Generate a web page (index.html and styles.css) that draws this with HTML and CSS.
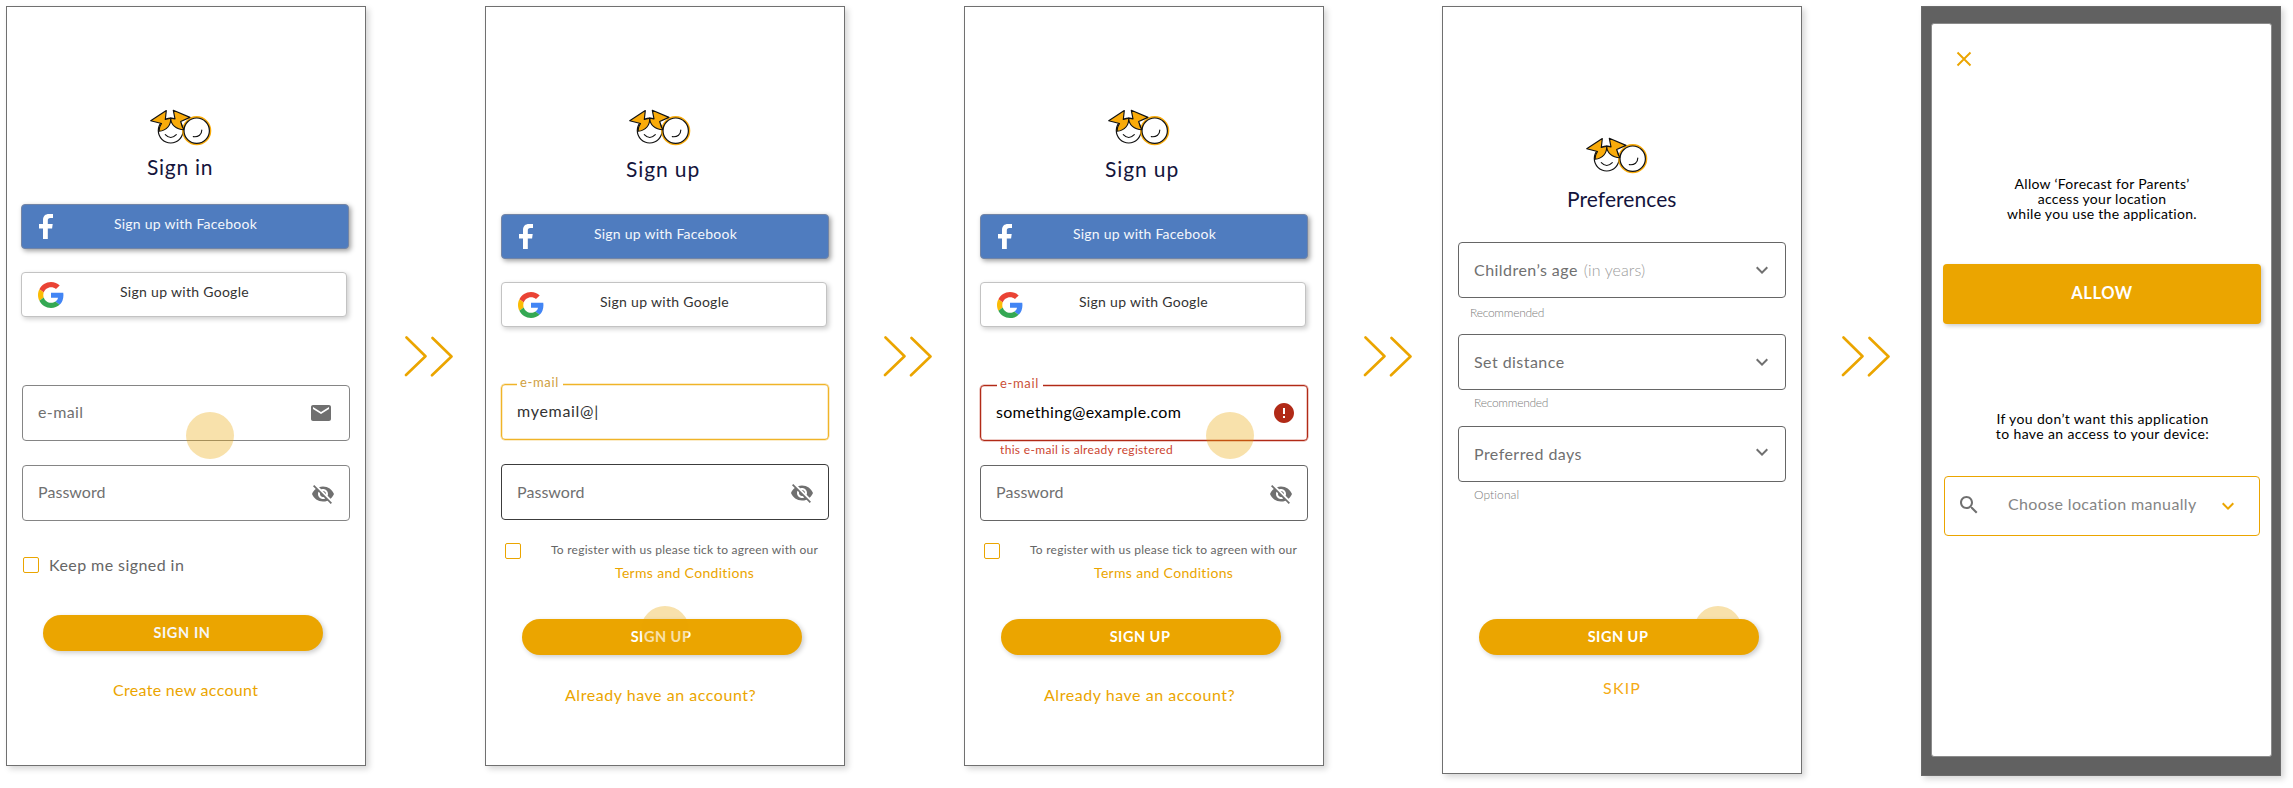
FILE: index.html
```html
<!DOCTYPE html>
<html lang="en">
<head>
<meta charset="utf-8">
<title>Forecast for Parents – onboarding flow</title>
<link rel="stylesheet" href="styles.css">
</head>
<body>
<svg class="defs" aria-hidden="true">
  <symbol id="logo" viewBox="0 0 66 38">
    <circle cx="22.7" cy="22.6" r="12.4" fill="#fff" stroke="#111" stroke-width="1.2"/>
    <circle cx="48.7" cy="22.7" r="13.6" fill="#fff" stroke="#f9ab0a" stroke-width="2"/>
    <path d="M2.700 12.700 18.300 2.600 17.300 11.500 22.700 10.200C23 17 19 22.500 11 23.300 10.800 19 12 17.500 13.500 15.500Z" fill="#f9ab0a" stroke="#111" stroke-width="1.150" stroke-linejoin="round"/>
    <path d="M25.300 2.300 42 9.400 32.700 13.500C33.500 17 34 19 36 21.700 28 21.500 23 17 22.700 10.200L27 10.900Z" fill="#f9ab0a" stroke="#111" stroke-width="1.150" stroke-linejoin="round"/>
    <circle cx="48.7" cy="22.7" r="12.7" fill="#fff" stroke="#111" stroke-width="1.2"/>
    <path d="M17.300 26.700Q22.700 32.300 28.300 26.700M45.300 28.600C50.500 29.300 53.800 26.500 53.800 22" fill="none" stroke="#111" stroke-width="1.150" stroke-linecap="round"/>
  </symbol>
  <symbol id="facebook" viewBox="0 0 14 25">
    <path d="M4 25V14.4H0V10h4V6.200C4 2 6.300 0 10 0h4v4.100h-2.600C9.400 4.100 8.800 5 8.800 6.800V10h4.900l-.6 4.400H8.800V25Z" fill="#fff"/>
  </symbol>
  <symbol id="google" viewBox="0 0 48 48">
    <path fill="#EA4335" d="M24 9.5c3.54 0 6.71 1.22 9.21 3.6l6.85-6.85C35.9 2.38 30.47 0 24 0 14.62 0 6.51 5.38 2.56 13.22l7.98 6.19C12.43 13.72 17.74 9.5 24 9.5z"/>
    <path fill="#4285F4" d="M46.98 24.55c0-1.57-.15-3.09-.38-4.55H24v9.02h12.94c-.58 2.96-2.26 5.48-4.78 7.18l7.73 6c4.51-4.18 7.09-10.36 7.09-17.65z"/>
    <path fill="#FBBC05" d="M10.53 28.59c-.48-1.45-.76-2.99-.76-4.59s.27-3.14.76-4.59l-7.98-6.19C.92 16.46 0 20.12 0 24c0 3.88.92 7.54 2.56 10.78l7.97-6.19z"/>
    <path fill="#34A853" d="M24 48c6.48 0 11.93-2.13 15.89-5.81l-7.73-6c-2.15 1.45-4.92 2.3-8.16 2.3-6.26 0-11.57-4.22-13.47-9.91l-7.98 6.19C6.51 42.62 14.62 48 24 48z"/>
  </symbol>
  <symbol id="mail" viewBox="0 0 24 24"><path d="M20 4H4c-1.1 0-1.99.9-1.99 2L2 18c0 1.1.9 2 2 2h16c1.100 0 2-.9 2-2V6c0-1.100-.9-2-2-2zm0 4-8 5-8-5V6l8 5 8-5v2z"/></symbol>
  <symbol id="eye-off" viewBox="0 0 24 24"><path d="M12 7c2.760 0 5 2.240 5 5 0 .65-.13 1.260-.36 1.830l2.920 2.920c1.510-1.260 2.700-2.890 3.430-4.750-1.730-4.390-6-7.500-11-7.500-1.400 0-2.740.25-3.980.7l2.160 2.160C10.740 7.130 11.350 7 12 7zM2 4.270l2.280 2.280.46.46C3.080 8.300 1.780 10.020 1 12c1.730 4.390 6 7.500 11 7.500 1.550 0 3.030-.3 4.380-.84l.42.42L19.730 22 21 20.730 3.270 3 2 4.270zM7.530 9.800l1.550 1.550c-.05.21-.08.43-.08.65 0 1.660 1.340 3 3 3 .22 0 .44-.03.65-.08l1.550 1.550c-.67.33-1.410.53-2.200.53-2.760 0-5-2.240-5-5 0-.79.2-1.530.53-2.200zm4.310-.78 3.150 3.150.02-.16c0-1.660-1.340-3-3-3l-.17.01z"/></symbol>
  <symbol id="error" viewBox="0 0 24 24"><path d="M12 2C6.480 2 2 6.480 2 12s4.480 10 10 10 10-4.480 10-10S17.520 2 12 2zm1 15h-2v-2h2v2zm0-4h-2V7h2v6z"/></symbol>
  <symbol id="expand" viewBox="0 0 24 24"><path d="M16.590 8.590 12 13.170 7.410 8.590 6 10l6 6 6-6z"/></symbol>
  <symbol id="search" viewBox="0 0 24 24"><path d="M15.500 14h-.79l-.28-.27C15.410 12.590 16 11.110 16 9.500 16 5.910 13.090 3 9.500 3S3 5.910 3 9.500 5.910 16 9.500 16c1.610 0 3.090-.59 4.230-1.570l.27.28v.79l5 4.990L20.490 19l-4.990-5zm-6 0C7.010 14 5 11.990 5 9.500S7.010 5 9.500 5 14 7.010 14 9.500 11.990 14 9.500 14z"/></symbol>
  <symbol id="next" viewBox="0 0 50 42"><path d="M2.500 2.500 21.500 21.200 2 40M28.500 3 47.500 21.500 28 40.300" fill="none" stroke="#eba500" stroke-width="2.600" stroke-linecap="round" stroke-linejoin="round"/></symbol>
</svg>

<main class="flow">
  <section class="phone signin">
    <svg class="logo"><use href="#logo"/></svg>
    <h1 class="title t-signin">Sign in</h1>
    <button class="social fb"><svg class="fb-icon"><use href="#facebook"/></svg><span>Sign up with Facebook</span></button>
    <button class="social gg"><svg class="gg-icon"><use href="#google"/></svg><span>Sign up with Google</span></button>
    <div class="field email"><span class="txt">e-mail</span><svg class="icon mail"><use href="#mail"/></svg><i class="tap"></i></div>
    <div class="field password"><span class="txt pw">Password</span><svg class="icon eye"><use href="#eye-off"/></svg></div>
    <label class="keep"><i class="box"></i><span>Keep me signed in</span></label>
    <button class="pill">SIGN IN</button>
    <a class="link create">Create new account</a>
  </section>

  <svg class="next n1"><use href="#next"/></svg>

  <section class="phone signup typing">
    <svg class="logo"><use href="#logo"/></svg>
    <h1 class="title t-signup">Sign up</h1>
    <button class="social fb"><svg class="fb-icon"><use href="#facebook"/></svg><span>Sign up with Facebook</span></button>
    <button class="social gg"><svg class="gg-icon"><use href="#google"/></svg><span>Sign up with Google</span></button>
    <div class="field email active"><span class="label">e-mail</span><span class="txt typed">myemail@|</span></div>
    <div class="field password dark"><span class="txt pw">Password</span><svg class="icon eye"><use href="#eye-off"/></svg></div>
    <div class="consent"><i class="box"></i><p>To register with us please tick to agreen with our<a>Terms and Conditions</a></p></div>
    <button class="pill up">SIGN UP<i class="tap"></i></button>
    <a class="link already">Already have an account?</a>
  </section>

  <svg class="next n2"><use href="#next"/></svg>

  <section class="phone signup failed">
    <svg class="logo"><use href="#logo"/></svg>
    <h1 class="title t-signup">Sign up</h1>
    <button class="social fb"><svg class="fb-icon"><use href="#facebook"/></svg><span>Sign up with Facebook</span></button>
    <button class="social gg"><svg class="gg-icon"><use href="#google"/></svg><span>Sign up with Google</span></button>
    <div class="field email invalid"><span class="label">e-mail</span><span class="txt filled">something@example.com</span><svg class="icon err"><use href="#error"/></svg><i class="tap"></i></div>
    <p class="message">this e-mail is already registered</p>
    <div class="field password mid"><span class="txt pw">Password</span><svg class="icon eye"><use href="#eye-off"/></svg></div>
    <div class="consent"><i class="box"></i><p>To register with us please tick to agreen with our<a>Terms and Conditions</a></p></div>
    <button class="pill up">SIGN UP</button>
    <a class="link already">Already have an account?</a>
  </section>

  <svg class="next n3"><use href="#next"/></svg>

  <section class="phone prefs">
    <svg class="logo"><use href="#logo"/></svg>
    <h1 class="title t-prefs">Preferences</h1>
    <div class="field select s1"><span class="txt age">Children’s age</span><span class="txt years">(in years)</span><svg class="icon"><use href="#expand"/></svg></div>
    <p class="hint h1">Recommended</p>
    <div class="field select s2"><span class="txt">Set distance</span><svg class="icon"><use href="#expand"/></svg></div>
    <p class="hint h2">Recommended</p>
    <div class="field select s3"><span class="txt">Preferred days</span><svg class="icon"><use href="#expand"/></svg></div>
    <p class="hint h3">Optional</p>
    <button class="pill up">SIGN UP<i class="tap"></i></button>
    <a class="link skip">SKIP</a>
  </section>

  <svg class="next n4"><use href="#next"/></svg>

  <section class="phone location">
    <div class="dialog">
      <svg class="close" viewBox="0 0 16 16"><path d="M1.500 1.500 14.500 14.500M14.500 1.500 1.500 14.500" stroke="#eba500" stroke-width="1.900"/></svg>
      <p class="ask">Allow ‘Forecast for Parents’<br>access your location<br>while you use the application.</p>
      <button class="allow">ALLOW</button>
      <p class="ask other">If you don’t want this application<br>to have an access to your device:</p>
      <div class="manual">
        <svg class="icon lens"><use href="#search"/></svg>
        <span>Choose location manually</span>
        <svg class="icon arrow"><use href="#expand"/></svg>
      </div>
    </div>
  </section>
</main>
</body>
</html>
```
FILE: styles.css
```css
* { box-sizing: border-box; }
body {
  margin: 0;
  background: #fff;
  font-family: Lato, "Liberation Sans", sans-serif;
  overflow: hidden;
}
h1, p { margin: 0; font-weight: 400; }
button { font: inherit; border: 0; padding: 0; }
i { display: block; }
.defs { position: absolute; width: 0; height: 0; }

.flow { display: flex; align-items: flex-start; padding: 6px 0 0 6px; height: 788px; }

.phone {
  flex: none;
  display: flex;
  flex-direction: column;
  align-items: flex-start;
  width: 360px;
  height: 760px;
  background: #fff;
  border: 1px solid #707070;
  box-shadow: 3px 3px 6px rgba(0, 0, 0, .16);
}
.prefs { height: 768px; }

/* arrows between the screens */
.next { flex: none; width: 50px; height: 42px; margin-top: 329px; }
.n1, .n2 { margin-left: 38px; margin-right: 31px; }
.n3 { margin-left: 39px; margin-right: 29px; }
.n4 { margin-left: 39px; margin-right: 30px; }

.logo { flex: none; width: 66px; height: 38px; margin: 101px 0 0 141px; }
.prefs .logo { margin-top: 129px; }

.title { font-size: 21px; line-height: 24px; padding-top: 1px; height: 24px; color: #14143c; white-space: nowrap; }
.t-signin { margin: 8px 0 0 140px; letter-spacing: .73px; }
.t-signup { margin: 10px 0 0 140px; letter-spacing: .9px; }
.t-prefs { margin: 12px 0 0 124px; letter-spacing: .07px; }

.social {
  flex: none;
  display: grid;
  grid-template-columns: 100%;
  width: 328px;
  height: 45px;
  margin-left: 15px;
  border-radius: 4px;
  font-size: 14px;
  line-height: 20px;
}
.social > * { grid-area: 1 / 1; }
.social span { margin-top: 9px; padding-left: 1px; text-align: center; }
.signin .social { margin-left: 14px; }
.fb {
  margin-top: 34px;
  background: #4f7cbf;
  border: 1px solid #7385a6;
  box-shadow: 2px 2px 5px rgba(0, 0, 0, .38);
  color: #f4f7fc;
  letter-spacing: .25px;
}
.signin .fb { margin-top: 26px; }
.gg {
  width: 326px;
  margin-top: 23px;
  background: #fff;
  border: 1px solid #c3c3c3;
  box-shadow: 2px 2px 5px rgba(0, 0, 0, .2);
  color: #333;
  letter-spacing: .3px;
}
.fb-icon { width: 14px; height: 25px; margin: 9px 0 0 17px; }
.gg-icon { width: 26px; height: 26px; margin: 9px 0 0 16px; }

.field {
  flex: none;
  position: relative;
  display: flex;
  align-items: flex-start;
  width: 328px;
  height: 56px;
  margin-left: 15px;
  padding: 0 0 0 15px;
  border: 1px solid #858585;
  border-radius: 4px;
}
.txt {
  margin-top: 16px;
  font-size: 16px;
  line-height: 20px;
  letter-spacing: .4px;
  color: #707070;
  white-space: nowrap;
}
.pw { letter-spacing: .05px; }
.icon { flex: none; width: 24px; height: 24px; fill: #707070; margin: 15px 11px 0 auto; }
.mail { margin-right: 16px; }
.eye { margin: 16px 14px 0 auto; }

.signin .email { margin-top: 68px; }
.signin .password { margin-top: 24px; }
.typing .email { margin-top: 57px; }
.typing .password { margin-top: 24px; }
.typing .pw { margin-top: 17px; }
.failed .email { margin-top: 58px; }
.failed .password { margin-top: 7px; }
.dark { border-color: #3c3c3c; }
.mid { border-color: #666; }

.active { border: 1px solid #f0b428; box-shadow: 0 0 0 .5px rgba(240, 180, 40, .5), inset 0 0 0 .5px rgba(240, 180, 40, .5); }
.invalid { border: 1px solid #b12a17; box-shadow: 0 0 0 .5px rgba(190, 50, 30, .5), inset 0 0 0 .5px rgba(190, 50, 30, .5); }
.label {
  position: absolute;
  left: 15px;
  top: -11px;
  padding: 0 4px 0 3px;
  background: #fff;
  font-size: 13px;
  line-height: 16px;
  letter-spacing: .65px;
  color: #cfa040;
}
.invalid .label { left: 16px; color: #cb5138; }
.typed { letter-spacing: .7px; color: #333; }
.failed .filled { letter-spacing: .3px; color: #000; }
.err { fill: #b12a17; }
.message { margin-left: 35px; margin-top: 1px; font-size: 12px; line-height: 16px; letter-spacing: .33px; color: #cc452f; }

/* finger position marker */
.tap {
  position: absolute;
  width: 48px;
  height: 47px;
  border-radius: 50%;
  background: rgba(235, 165, 0, .33);
}
.signin .tap { left: 163px; top: 26px; }
.failed .tap { left: 225px; top: 26px; }
.typing .tap { left: 119px; top: -13px; }
.prefs .tap { left: 215px; top: -13px; clip-path: inset(0 0 33px 0); }

.box { flex: none; width: 16px; height: 16px; border: 1px solid #eba500; border-radius: 2px; }
.keep {
  flex: none;
  display: flex;
  align-items: center;
  gap: 10px;
  height: 16px;
  margin: 36px 0 0 16px;
  font-size: 16px;
  line-height: 20px;
  letter-spacing: .43px;
  color: #666;
}
.consent { flex: none; display: flex; gap: 30px; height: 41px; margin: 21px 0 0 19px; }
.failed .consent { margin-top: 20px; }
.consent .box { margin-top: 2px; }
.consent p {
  padding-top: 1px;
  font-size: 12px;
  line-height: 16px;
  letter-spacing: .25px;
  color: #666;
  white-space: nowrap;
}
.consent a {
  display: block;
  margin: 5px 0 0 64px;
  font-size: 14px;
  line-height: 20px;
  letter-spacing: .32px;
  color: #eba500;
}

.pill {
  flex: none;
  position: relative;
  width: 280px;
  height: 36px;
  margin: 42px 0 0 36px;
  padding: 0 2px 1px 0;
  border-radius: 18px;
  background: #eba500;
  box-shadow: 2px 2px 5px rgba(0, 0, 0, .2);
  color: #f6f6f6;
  font-size: 14.5px;
  font-weight: 700;
  line-height: 20px;
  letter-spacing: .6px;
}
.up { margin-top: 37px; color: #fff; letter-spacing: .5px; }
.prefs .up { margin-top: 116px; }

.link { padding-top: 1px; font-size: 16px; line-height: 20px; color: #eba500; white-space: nowrap; }
.create { margin: 28px 0 0 106px; letter-spacing: .3px; }
.already { margin: 29px 0 0 79px; letter-spacing: .54px; }
.skip { margin: 22px 0 0 160px; letter-spacing: 1.2px; color: #f5ab14; }

.select { border-color: #666; }
.select .txt { margin-top: 17px; letter-spacing: .45px; }
.select .years { margin-left: 6px; font-weight: 300; letter-spacing: .1px; color: #9a9a9a; }
.s1 { margin-top: 32px; }
.s2 { margin-top: 13px; }
.s3 { margin-top: 15px; }
.s3 .icon { margin-top: 13px; }
.hint { font-size: 12px; font-weight: 300; line-height: 16px; letter-spacing: -.26px; color: #7c7c7c; }
.h1 { margin: 7px 0 0 27px; }
.h2 { margin: 5px 0 0 31px; }
.h3 { margin: 5px 0 0 31px; letter-spacing: .1px; }

.location { height: 770px; padding: 16px 8px 18px 9px; background: #616161; border: 1px solid #6b6b6b; }
.dialog {
  display: flex;
  flex-direction: column;
  align-items: flex-start;
  width: 341px;
  height: 734px;
  border: 1px solid #8b8b8b;
  border-radius: 3px;
  background: #fff;
}
.close { flex: none; width: 16px; height: 16px; margin: 27px 0 0 24px; }
.ask {
  align-self: center;
  margin-top: 109px;
  padding-left: 1px;
  font-size: 14px;
  line-height: 15px;
  letter-spacing: .28px;
  color: #000;
  text-align: center;
}
.other { margin-top: 87px; margin-left: 1px; letter-spacing: .37px; }
.allow {
  flex: none;
  width: 318px;
  height: 60px;
  margin: 43px 0 0 11px;
  border-radius: 4px;
  background: #eba500;
  box-shadow: 2px 2px 4px rgba(0, 0, 0, .2);
  color: #fff;
  font-size: 16.5px;
  font-weight: 700;
  line-height: 20px;
  letter-spacing: .6px;
  padding-bottom: 3px;
}
.manual {
  flex: none;
  display: flex;
  align-items: flex-start;
  width: 316px;
  height: 60px;
  margin: 35px 0 0 12px;
  border: 1px solid #eba500;
  border-radius: 4px;
  font-size: 16px;
  line-height: 20px;
  letter-spacing: .36px;
  color: #858585;
}
.manual span { margin: 17px 0 0 27px; }
.manual .lens { margin: 16px 0 0 12px; }
.manual .arrow { margin: 17px 19px 0 auto; fill: #eba500; }
```
